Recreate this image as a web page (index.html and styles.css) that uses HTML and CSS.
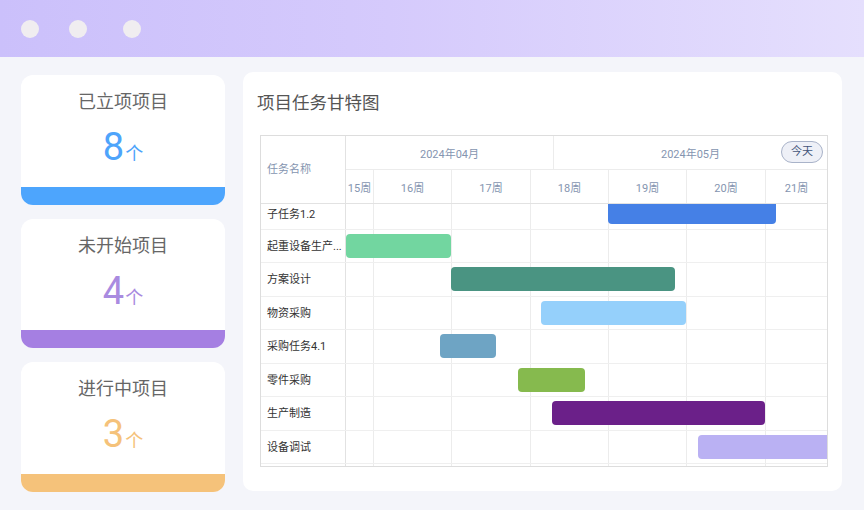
FILE: index.html
```html
<!DOCTYPE html>
<html lang="zh">
<head>
    <meta charset="UTF-8">
    <title>项目任务甘特图</title>
    <link rel="stylesheet" href="styles.css">
</head>
<body>
    <div class="topbar">
        <span class="dot"></span>
        <span class="dot"></span>
        <span class="dot"></span>
    </div>

    <div class="main">
        <div class="cards">
            <div class="card blue">
                <div class="card-title">已立项项目</div>
                <div class="card-num">8<span class="unit">个</span></div>
                <div class="card-bar"></div>
            </div>
            <div class="card purple">
                <div class="card-title">未开始项目</div>
                <div class="card-num">4<span class="unit">个</span></div>
                <div class="card-bar"></div>
            </div>
            <div class="card orange">
                <div class="card-title">进行中项目</div>
                <div class="card-num">3<span class="unit">个</span></div>
                <div class="card-bar"></div>
            </div>
        </div>

        <div class="panel">
            <h2 class="panel-title">项目任务甘特图</h2>

            <div class="gantt">
                <div class="gantt-head">
                    <div class="name-head">任务名称</div>
                    <div class="time-head">
                        <div class="months">
                            <div class="month m4">2024年04月</div>
                            <div class="month m5">2024年05月<span class="today">今天</span></div>
                        </div>
                        <div class="weeks">
                            <div class="week w15">15周</div>
                            <div class="week w78">16周</div>
                            <div class="week w79">17周</div>
                            <div class="week w78">18周</div>
                            <div class="week w78">19周</div>
                            <div class="week w79">20周</div>
                            <div class="week wlast">21周</div>
                        </div>
                    </div>
                </div>

                <div class="gantt-body">
                    <div class="grid-cols">
                        <div class="col w15"></div>
                        <div class="col w78"></div>
                        <div class="col w79"></div>
                        <div class="col w78"></div>
                        <div class="col w78"></div>
                        <div class="col w79"></div>
                        <div class="col wlast"></div>
                    </div>
                    <div class="rows">
                        <div class="row">
                            <div class="task">子任务1.2</div>
                            <div class="track"><div class="bar" style="left:262px;width:168px;background:#4580e6"></div></div>
                        </div>
                        <div class="row">
                            <div class="task" title="起重设备生产制造">起重设备生产...</div>
                            <div class="track"><div class="bar" style="left:0;width:105px;background:#72d6a0"></div></div>
                        </div>
                        <div class="row">
                            <div class="task">方案设计</div>
                            <div class="track"><div class="bar" style="left:105px;width:224px;background:#4a9482"></div></div>
                        </div>
                        <div class="row">
                            <div class="task">物资采购</div>
                            <div class="track"><div class="bar" style="left:195px;width:145px;background:#95d0fb"></div></div>
                        </div>
                        <div class="row">
                            <div class="task">采购任务4.1</div>
                            <div class="track"><div class="bar" style="left:94px;width:56px;background:#6ea4c4"></div></div>
                        </div>
                        <div class="row">
                            <div class="task">零件采购</div>
                            <div class="track"><div class="bar" style="left:172px;width:67px;background:#86ba4e"></div></div>
                        </div>
                        <div class="row">
                            <div class="task">生产制造</div>
                            <div class="track"><div class="bar" style="left:206px;width:213px;background:#6b2089"></div></div>
                        </div>
                        <div class="row">
                            <div class="task">设备调试</div>
                            <div class="track"><div class="bar" style="left:352px;width:140px;background:#bab1f3"></div></div>
                        </div>
                        <div class="row">
                            <div class="task"></div>
                            <div class="track"></div>
                        </div>
                    </div>
                </div>
            </div>
        </div>
    </div>
</body>
</html>
```

FILE: styles.css
```css
body {
    margin: 0;
    font-family: Roboto, "Noto Sans CJK SC", sans-serif;
    background: #f4f5fa;
    width: 864px;
    height: 510px;
    overflow: hidden;
}

.topbar {
    height: 57px;
    background: linear-gradient(90deg, #cbc0fb 0%, #d5cafc 45%, #e5dffd 100%);
    display: flex;
    align-items: center;
    padding-left: 21px;
    box-sizing: border-box;
}

.dot {
    width: 18px;
    height: 18px;
    border-radius: 50%;
    background: #f0edf0;
    margin-right: 30px;
}

.dot:nth-child(2) {
    margin-right: 36px;
}

.main {
    display: flex;
    gap: 18px;
    padding: 15px 22px 0 21px;
}

.cards {
    width: 204px;
    height: 417px;
    margin-top: 3px;
    display: flex;
    flex-direction: column;
    gap: 14px;
}

.card {
    flex: 1;
    background: white;
    border-radius: 12px;
    overflow: hidden;
    display: flex;
    flex-direction: column;
    align-items: center;
}

.card-title {
    margin-top: 16px;
    font-size: 18px;
    line-height: 22px;
    color: #666;
}

.card-num {
    margin-top: 12px;
    font-size: 38px;
    line-height: 44px;
}

.unit {
    font-size: 18px;
    margin-left: 1px;
}

.card-bar {
    margin-top: auto;
    width: 100%;
    height: 18px;
}

.blue .card-num { color: #4ea4fb; }
.blue .card-bar { background: #4da5fd; }
.purple .card-num { color: #a98be0; }
.purple .card-bar { background: #a57fe2; }
.orange .card-num { color: #f5c27a; }
.orange .card-bar { background: #f5c27a; }

.panel {
    flex: 1;
    height: 419px;
    background: white;
    border-radius: 10px;
    padding: 18px 14px 0 17px;
    box-sizing: border-box;
}

.panel-title {
    margin: 1px 0 20px -3px;
    font-size: 17.5px;
    line-height: 24px;
    font-weight: 400;
    color: #555;
}

.gantt {
    width: 568px;
    height: 332px;
    border: 1px solid #ddd;
    box-sizing: border-box;
    font-size: 11px;
    overflow: hidden;
}

.gantt-head {
    display: flex;
    height: 67px;
    border-bottom: 1px solid #e2e2e2;
    color: #8595b0;
}

.name-head {
    width: 85px;
    border-right: 1px solid #e2e2e2;
    display: flex;
    align-items: center;
    padding: 0 0 3px 6px;
    box-sizing: border-box;
}

.time-head {
    flex: 1;
    display: flex;
    flex-direction: column;
}

.months {
    display: flex;
    height: 33px;
    border-bottom: 1px solid #ececec;
}

.month {
    display: flex;
    align-items: center;
    justify-content: center;
    position: relative;
}

.m4 {
    width: 207px;
    border-right: 1px solid #ececec;
}

.m5 {
    flex: 1;
}

.today {
    position: absolute;
    right: 4px;
    top: 5px;
    height: 20px;
    padding: 0 9px;
    border: 1px solid #a9b3c9;
    border-radius: 11px;
    background: #eef0f7;
    color: #44557a;
    line-height: 20px;
}

.weeks {
    display: flex;
    flex: 1;
}

.week, .col {
    box-sizing: border-box;
    border-right: 1px solid #ececec;
    display: flex;
    align-items: center;
    justify-content: center;
}

.w15 { width: 28px; }
.w78 { width: 78px; }
.w79 { width: 79px; }
.wlast { flex: 1; border-right: none; }

.gantt-body {
    position: relative;
    height: 263px;
    overflow: hidden;
}

.grid-cols {
    position: absolute;
    top: 0;
    bottom: 0;
    left: 85px;
    right: 0;
    display: flex;
}

.rows {
    position: relative;
    margin-top: -8px;
}

.row {
    display: flex;
    height: 33.5px;
    box-sizing: border-box;
    border-bottom: 1px solid #efefef;
}

.task {
    width: 85px;
    padding: 0 2px 0 6px;
    box-sizing: border-box;
    border-right: 1px solid #e2e2e2;
    color: #333;
    line-height: 33px;
    white-space: nowrap;
    overflow: hidden;
    background: white;
}

.row:first-child .task {
    line-height: 29px;
    padding-top: 4px;
}

.track {
    flex: 1;
    position: relative;
}

.bar {
    position: absolute;
    top: 4px;
    height: 24px;
    border-radius: 4px;
}
```
